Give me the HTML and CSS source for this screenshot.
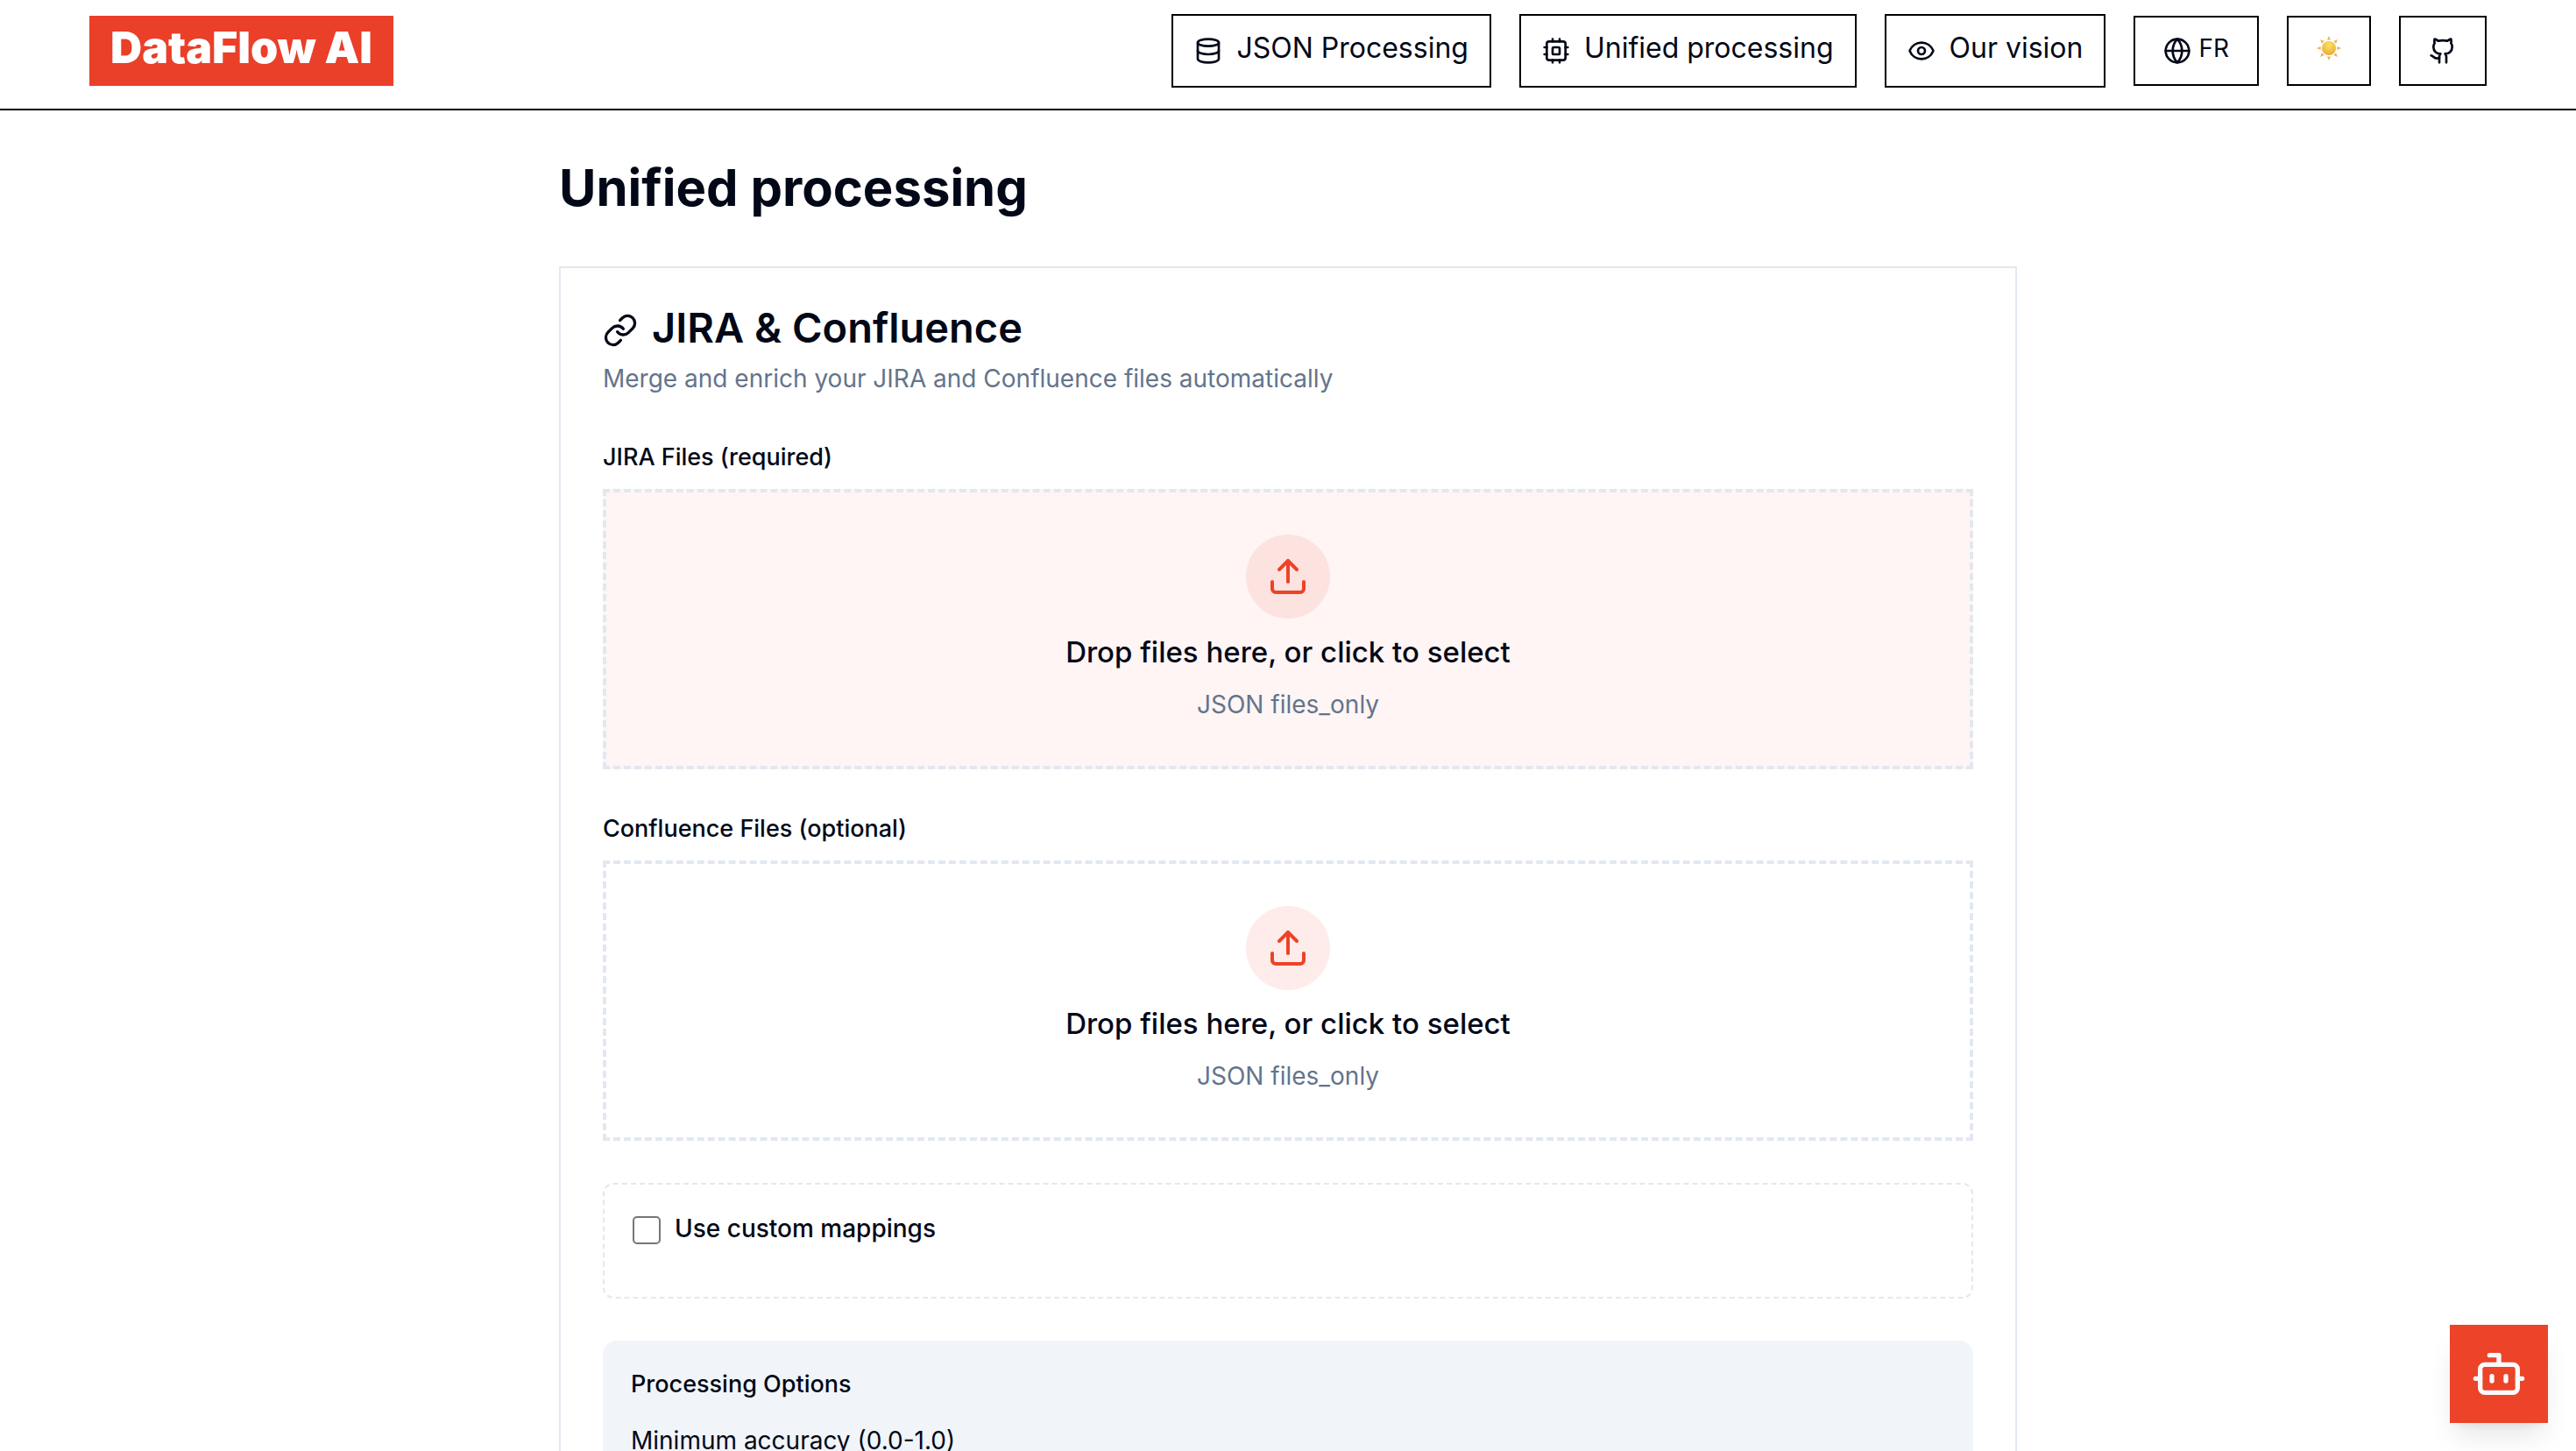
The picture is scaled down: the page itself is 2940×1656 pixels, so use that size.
FILE: index.html
```html
<!DOCTYPE html>
<html lang="en">
<head>
<meta charset="utf-8">
<meta name="viewport" content="width=device-width, initial-scale=1">
<title>DataFlow AI</title>
<link rel="stylesheet" href="styles.css">
</head>
<body>
<header class="site-header">
  <a class="logo" href="#">DataFlow AI</a>
  <nav class="nav">
    <a class="nav-link" href="#">
      <svg class="icon" viewBox="0 0 24 24"><ellipse cx="12" cy="5" rx="9" ry="3"/><path d="M3 5V19A9 3 0 0 0 21 19V5"/><path d="M3 12A9 3 0 0 0 21 12"/></svg>
      <span class="label">JSON Processing</span>
    </a>
    <a class="nav-link" href="#">
      <svg class="icon" viewBox="0 0 24 24"><rect width="16" height="16" x="4" y="4" rx="2"/><rect width="6" height="6" x="9" y="9" rx="1"/><path d="M15 2v2M15 20v2M2 15h2M2 9h2M20 15h2M20 9h2M9 2v2M9 20v2"/></svg>
      <span class="label">Unified processing</span>
    </a>
    <a class="nav-link" href="#">
      <svg class="icon" viewBox="0 0 24 24"><path d="M2.062 12.348a1 1 0 0 1 0-.696 10.75 10.75 0 0 1 19.876 0 1 1 0 0 1 0 .696 10.75 10.75 0 0 1-19.876 0"/><circle cx="12" cy="12" r="3"/></svg>
      <span class="label">Our vision</span>
    </a>
    <button class="tool" type="button">
      <svg class="icon" viewBox="0 0 24 24"><circle cx="12" cy="12" r="10"/><path d="M12 2a14.5 14.5 0 0 0 0 20 14.5 14.5 0 0 0 0-20"/><path d="M2 12h20"/></svg>
      <span class="label">FR</span>
    </button>
    <button class="tool" type="button" aria-label="Toggle theme">
      <svg class="sun" viewBox="0 0 28 28">
        <defs>
          <radialGradient id="sun-fill" cx=".5" cy=".3" r=".7"><stop offset="0" stop-color="#fae45f"/><stop offset="1" stop-color="#eba93a"/></radialGradient>
          <path id="ray" d="M14 0l2 4.600h-4z"/>
        </defs>
        <g fill="#eeb250"><use href="#ray"/><use href="#ray" transform="rotate(45 14 14)"/><use href="#ray" transform="rotate(90 14 14)"/><use href="#ray" transform="rotate(135 14 14)"/><use href="#ray" transform="rotate(180 14 14)"/><use href="#ray" transform="rotate(225 14 14)"/><use href="#ray" transform="rotate(270 14 14)"/><use href="#ray" transform="rotate(315 14 14)"/></g>
        <circle cx="14" cy="14" r="8" fill="url(#sun-fill)"/>
      </svg>
    </button>
    <a class="tool" href="#" aria-label="GitHub">
      <svg class="icon" viewBox="0 0 24 24"><path d="M15 22v-4a4.800 4.800 0 0 0-1-3.500c3 0 6-2 6-5.500.08-1.250-.27-2.480-1-3.500.28-1.150.28-2.350 0-3.500 0 0-1 0-3 1.500-2.640-.5-5.360-.5-8 0C6 2 5 2 5 2c-.3 1.150-.3 2.350 0 3.500A5.403 5.403 0 0 0 4 9c0 3.500 3 5.500 6 5.500-.39.490-.68 1.050-.85 1.650-.17.600-.22 1.230-.15 1.850v4"/><path d="M9 18c-4.510 2-5-2-7-2"/></svg>
    </a>
  </nav>
</header>

<main class="page">
  <h1 class="page-title">Unified processing</h1>
  <section class="card">
    <h2 class="card-title">
      <svg class="icon icon-link" viewBox="0 0 24 24"><path d="M10 13a5 5 0 0 0 7.540.540l3-3a5 5 0 0 0-7.070-7.070l-1.720 1.710"/><path d="M14 11a5 5 0 0 0-7.540-.540l-3 3a5 5 0 0 0 7.070 7.070l1.710-1.710"/></svg>
      <span class="label">JIRA &amp; Confluence</span>
    </h2>
    <p class="card-text">Merge and enrich your JIRA and Confluence files automatically</p>

    <form class="form">
      <div class="field">
        <span class="field-label" id="jira-label">JIRA Files (required)</span>
        <button class="dropzone dropzone-active" type="button" aria-describedby="jira-label">
          <span class="badge"><svg class="icon icon-upload" viewBox="0 0 24 24"><path d="M21 15v4a2 2 0 0 1-2 2H5a2 2 0 0 1-2-2v-4"/><path d="M17 8l-5-5-5 5"/><path d="M12 3v12"/></svg></span>
          <span class="drop-title">Drop files here, or click to select</span>
          <span class="drop-hint">JSON files_only</span>
        </button>
      </div>
      <div class="field">
        <span class="field-label" id="confluence-label">Confluence Files (optional)</span>
        <button class="dropzone" type="button" aria-describedby="confluence-label">
          <span class="badge"><svg class="icon icon-upload" viewBox="0 0 24 24"><path d="M21 15v4a2 2 0 0 1-2 2H5a2 2 0 0 1-2-2v-4"/><path d="M17 8l-5-5-5 5"/><path d="M12 3v12"/></svg></span>
          <span class="drop-title">Drop files here, or click to select</span>
          <span class="drop-hint">JSON files_only</span>
        </button>
      </div>
      <div class="mappings">
        <input class="checkbox" type="checkbox" id="mappings">
        <label class="check-label" for="mappings">Use custom mappings</label>
      </div>
      <section class="options">
        <h3 class="options-title">Processing Options</h3>
        <label class="option-label" for="accuracy">Minimum accuracy (0.0-1.0)</label>
        <input class="option-input" id="accuracy" type="number" min="0" max="1" step="0.1">
      </section>
    </form>
  </section>
</main>

<button class="chat" type="button" aria-label="Open assistant">
  <svg class="icon icon-bot" viewBox="0 0 24 24"><path d="M12 8V4H8"/><rect width="16" height="12" x="4" y="8" rx="2"/><path d="M2 14h2M20 14h2M15 13v2M9 13v2"/></svg>
</button>
</body>
</html>
```
FILE: styles.css
```css
* { box-sizing: border-box; }

html { overflow-x: hidden; }

body {
  margin: 0;
  background: #fff;
  color: #020817;
  font-family: Inter, "Liberation Sans", sans-serif;
  font-size: 28px;
  line-height: 40px;
}

h1, h2, h3, p { margin: 0; }

button { font: inherit; color: inherit; cursor: pointer; }

a { color: inherit; text-decoration: none; }

.icon {
  flex: none;
  width: 32px;
  height: 32px;
  fill: none;
  stroke: currentColor;
  stroke-width: 2;
  stroke-linecap: round;
  stroke-linejoin: round;
}

/* The labels sit a little above the middle of their row. */
.label { padding-bottom: 6px; }

.site-header {
  display: flex;
  align-items: center;
  justify-content: space-between;
  padding: 16px 102px 24px;
  border-bottom: 2px solid #000;
}

.logo {
  padding: 8px 24px 16px;
  background: #ea3f29;
  color: #fff;
  font-size: 50px;
  line-height: 56px;
  font-weight: 900;
}

.nav {
  display: flex;
  align-items: center;
  gap: 32px;
}

.nav-link,
.tool {
  display: flex;
  align-items: center;
  justify-content: center;
  border: 2px solid #000;
  background: #fff;
}

.nav-link {
  gap: 16px;
  height: 84px;
  padding: 0 24px;
  font-size: 32px;
}

.tool {
  gap: 8px;
  height: 80px;
  padding: 0 32px;
}

.sun {
  width: 28px;
  height: 28px;
  margin-bottom: 6px;
}

.page {
  max-width: 1664px;
  margin: 0 auto;
  padding-top: 48px;
}

.page-title {
  margin-bottom: 50px;
  font-size: 58px;
  line-height: 80px;
  font-weight: 700;
}

.card {
  padding: 40px 48px 48px;
  border: 2px solid #e2e8f0;
}

.card-title {
  display: flex;
  align-items: center;
  gap: 16px;
  margin-bottom: 4px;
  font-size: 47px;
  line-height: 56px;
  font-weight: 600;
}

.icon-link { width: 40px; height: 40px; }

.card-text { color: #64748b; }

.form {
  display: grid;
  gap: 48px;
  padding-top: 50px;
}

.field { display: grid; gap: 16px; }

.field-label,
.drop-title,
.check-label,
.options-title { font-weight: 500; }

.field-label,
.options-title { font-size: 27px; }

.dropzone {
  display: flex;
  flex-direction: column;
  align-items: center;
  width: 100%;
  padding: 48px 48px 50px;
  border: 4px dashed #e2e8f0;
  background: #fff;
}

.dropzone-active { background: #fef5f4; }

.badge {
  display: grid;
  place-items: center;
  width: 96px;
  height: 96px;
  margin-bottom: 18px;
  border-radius: 50%;
  background: rgba(236, 67, 41, .1);
  color: #ec4329;
}

.icon-upload { width: 48px; height: 48px; }

.drop-title { margin-bottom: 20px; font-size: 33px; }

.drop-hint { color: #64748b; }

.mappings {
  display: flex;
  align-items: flex-start;
  gap: 16px;
  height: 132px;
  padding: 30px 32px;
  border: 2px dashed #e2e8f0;
  border-radius: 12px;
}

.checkbox {
  appearance: none;
  width: 32px;
  height: 32px;
  margin: 6px 0 0;
  border: 2px solid #767676;
  border-radius: 5px;
  background: #fff;
}

.options {
  display: grid;
  gap: 24px;
  padding: 30px 32px;
  border-radius: 16px;
  background: #f1f5f9;
}

.option-input {
  height: 80px;
  padding: 0 24px;
  border: 2px solid #e2e8f0;
  font: inherit;
}

.chat {
  position: fixed;
  right: 32px;
  bottom: 32px;
  display: grid;
  place-items: center;
  width: 112px;
  height: 112px;
  padding: 0;
  border: 0;
  background: #ec4329;
  color: #fafafa;
  box-shadow: 0 20px 30px -6px rgba(0, 0, 0, .1), 0 8px 12px -8px rgba(0, 0, 0, .1);
}

.icon-bot { width: 64px; height: 64px; }
```
